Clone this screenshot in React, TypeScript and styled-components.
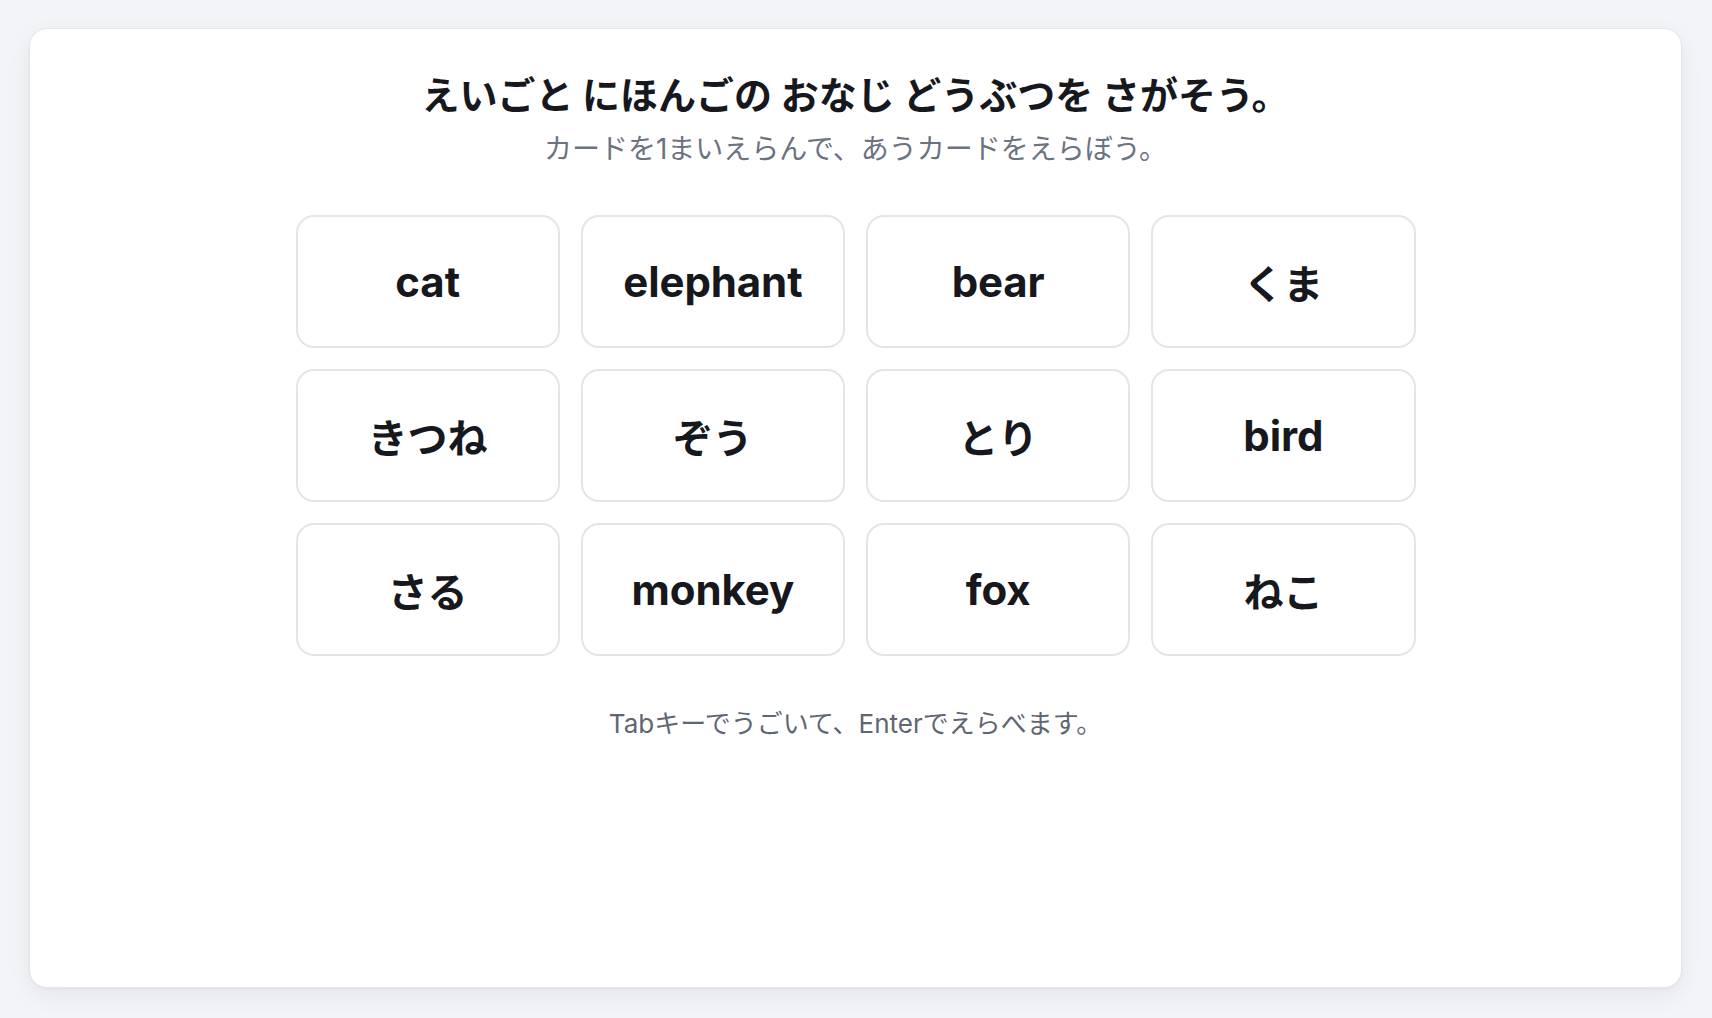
import React from "react";
import styled, { createGlobalStyle } from "styled-components";

const GlobalStyle = createGlobalStyle`
  * { box-sizing: border-box; }
  html, body {
    margin: 0;
    padding: 0;
    background: #f3f4f7;
  }
  body {
    font-family: "Inter", "Noto Sans CJK JP", sans-serif;
    color: #16181d;
  }
`;

const Page = styled.div`
  padding: 28px 30px 30px 29px;
  min-height: 100vh;
  display: flex;
`;

const Panel = styled.main`
  flex: 1;
  background: #ffffff;
  border: 1px solid #e4e6eb;
  border-radius: 18px;
  box-shadow: 0 8px 24px rgba(17, 24, 39, 0.06), 0 1px 3px rgba(17, 24, 39, 0.04);
  padding: 41px 24px 40px;
  display: flex;
  flex-direction: column;
  align-items: center;
`;

const Title = styled.h1`
  margin: 0;
  font-family: "Noto Sans CJK JP", sans-serif;
  font-size: 38px;
  line-height: 46px;
  font-weight: 700;
  color: #16181d;
  text-align: center;
`;

const Subtitle = styled.p`
  margin: 15px 0 0;
  font-family: "Inter", "Noto Sans CJK JP", sans-serif;
  font-size: 28px;
  line-height: 36px;
  font-weight: 400;
  color: #6b7280;
  text-align: center;
`;

const Grid = styled.div`
  margin-top: 48px;
  width: 1120px;
  display: grid;
  grid-template-columns: repeat(4, 1fr);
  grid-auto-rows: 133px;
  gap: 21px;
`;

const Tile = styled.button<{ $jp?: boolean }>`
  appearance: none;
  background: #ffffff;
  border: 2px solid #e3e5ea;
  border-radius: 18px;
  display: flex;
  align-items: center;
  justify-content: center;
  cursor: pointer;
  padding: 0;
  font-family: ${(p) => (p.$jp ? `"Noto Sans CJK JP", sans-serif` : `"Inter", sans-serif`)};
  font-size: ${(p) => (p.$jp ? "40px" : "42px")};
  font-weight: 700;
  letter-spacing: ${(p) => (p.$jp ? "0" : "-0.1px")};
  color: #16181d;
`;

const Hint = styled.p`
  margin: 51px 0 0;
  font-family: "Inter", "Noto Sans CJK JP", sans-serif;
  font-size: 26px;
  line-height: 33px;
  color: #5f6673;
  text-align: center;
`;

const cards: { label: string; jp: boolean }[] = [
  { label: "cat", jp: false },
  { label: "elephant", jp: false },
  { label: "bear", jp: false },
  { label: "くま", jp: true },
  { label: "きつね", jp: true },
  { label: "ぞう", jp: true },
  { label: "とり", jp: true },
  { label: "bird", jp: false },
  { label: "さる", jp: true },
  { label: "monkey", jp: false },
  { label: "fox", jp: false },
  { label: "ねこ", jp: true },
];

export default function App() {
  return (
    <>
      <GlobalStyle />
      <Page>
        <Panel>
          <Title>えいごと にほんごの おなじ どうぶつを さがそう。</Title>
          <Subtitle>カードを1まいえらんで、あうカードをえらぼう。</Subtitle>
          <Grid>
            {cards.map((c) => (
              <Tile key={c.label} $jp={c.jp} type="button">
                {c.label}
              </Tile>
            ))}
          </Grid>
          <Hint>Tabキーでうごいて、Enterでえらべます。</Hint>
        </Panel>
      </Page>
    </>
  );
}
